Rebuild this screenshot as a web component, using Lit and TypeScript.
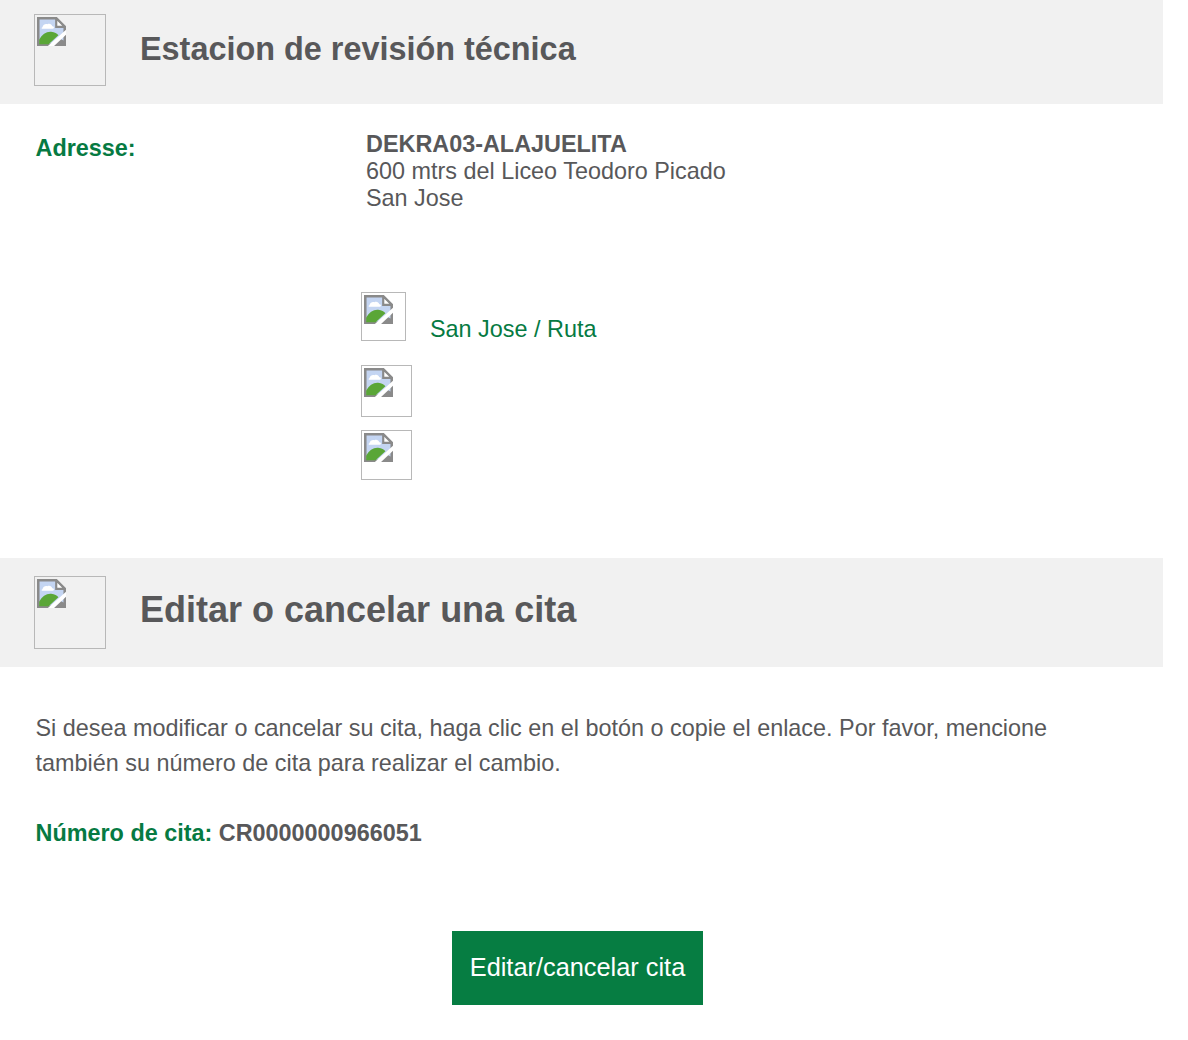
import { LitElement, html, css, svg } from "lit";
import { customElement } from "lit/decorators.js";

const broken = svg`<svg class="ico" viewBox="0 0 16 16" width="29" height="29" aria-hidden="true">
  <path d="M0.7 0.7H10.6L15.3 5.4V15.3H0.7Z" fill="#c4d5f2" stroke="#8a8a8a" stroke-width="1.4"/>
  <path d="M10.6 0.7V5.4H15.3Z" fill="#fff" stroke="#8a8a8a" stroke-width="1.2"/>
  <path d="M3 5.6c.4-1.5 1.7-2 2.8-1.6 1-.6 2.4 0 2.6 1.1 1.1 0 1.4 1.2.3 1.4H3.3c-.9 0-1.1-.7-.3-.9Z" fill="#fff"/>
  <path d="M1.2 15V12.6C2.8 9.6 5.2 8 7.8 8.2c2 .1 3.3 1 4 1.8L6.4 15Z" fill="#5aa637"/>
  <path d="M12.8 12l2.4 1.2V15.2H9.8Z" fill="#8a8a8a"/>
  <path d="M5.8 16.2L16 7V9.8L9.2 16.2Z" fill="#fff"/>
</svg>`;

@customElement("app-root")
export class AppRoot extends LitElement {
  static styles = css`
    :host { display: block; width: 1163px; font-family: "Liberation Sans", Arial, sans-serif; color: #58585a; background: #fff; }
    .bar { display: flex; align-items: center; background: #f1f1f1; padding-left: 34px; gap: 34px; }
    .bar1 { height: 104px; padding-bottom: 6px; box-sizing: border-box; }
    .bar2 { height: 109px; margin-top: 78px; padding-bottom: 5px; box-sizing: border-box; }
    .broken { box-sizing: border-box; border: 1px solid #b8b8b8; padding: 2px; flex: none; display: block; }
    .ico { display: block; }
    .b72 { width: 72px; height: 72px; margin-top: 2px; }
    .b73 { width: 72px; height: 73px; margin-top: 5px; }
    h1 { margin: 0; font-weight: 700; line-height: 1; }
    .t1 { font-size: 32.4px; }
    .t2 { font-size: 36px; }
    .addr { display: grid; grid-template-columns: 330px 1fr; padding: 27px 0 0 35.5px; }
    .lbl { color: #067a42; font-weight: 700; font-size: 23.4px; line-height: 34px; }
    .val { font-size: 23.4px; line-height: 27px; padding-left: .5px; }
    .val b { display: block; }
    .val span { display: block; }
    .links { padding: 80px 0 0 361px; }
    .r1 { display: flex; align-items: flex-start; gap: 24px; height: 73px; }
    .r1 .broken { width: 45px; height: 49px; }
    .r1 a { color: #067a42; font-size: 23.4px; line-height: 28px; margin-top: 23px; }
    .r2 { width: 51px; height: 52px; margin-bottom: 13px; }
    .r3 { width: 51px; height: 50px; }
    .body { padding: 44px 35.5px 0; }
    .body p { margin: 0; font-size: 23.4px; line-height: 35px; width: 1060px; }
    .num { font-size: 23.4px; line-height: 35px; font-weight: 700; margin-top: 35px; }
    .num em { font-style: normal; color: #067a42; }
    .act { display: flex; justify-content: center; padding: 80px 8px 35px 0; }
    .btn { background: #067d42; color: #fff; font-size: 25.35px; height: 74px; box-sizing: border-box; padding: 0 18px 2px; display: flex; align-items: center; }
  `;
  render() {
    return html`
      <div class="bar bar1">
        <div class="broken b72">${broken}</div>
        <h1 class="t1">Estacion de revisión técnica</h1>
      </div>
      <div class="addr">
        <div class="lbl">Adresse:</div>
        <div class="val"><b>DEKRA03-ALAJUELITA</b><span>600 mtrs del Liceo Teodoro Picado</span><span>San Jose</span></div>
      </div>
      <div class="links">
        <div class="r1"><div class="broken">${broken}</div><a>San Jose / Ruta</a></div>
        <div class="broken r2">${broken}</div>
        <div class="broken r3">${broken}</div>
      </div>
      <div class="bar bar2">
        <div class="broken b73">${broken}</div>
        <h1 class="t2">Editar o cancelar una cita</h1>
      </div>
      <div class="body">
        <p>Si desea modificar o cancelar su cita, haga clic en el botón o copie el enlace. Por favor, mencione también su número de cita para realizar el cambio.</p>
        <div class="num"><em>Número de cita:</em> CR0000000966051</div>
      </div>
      <div class="act"><div class="btn">Editar/cancelar cita</div></div>
    `;
  }
}
